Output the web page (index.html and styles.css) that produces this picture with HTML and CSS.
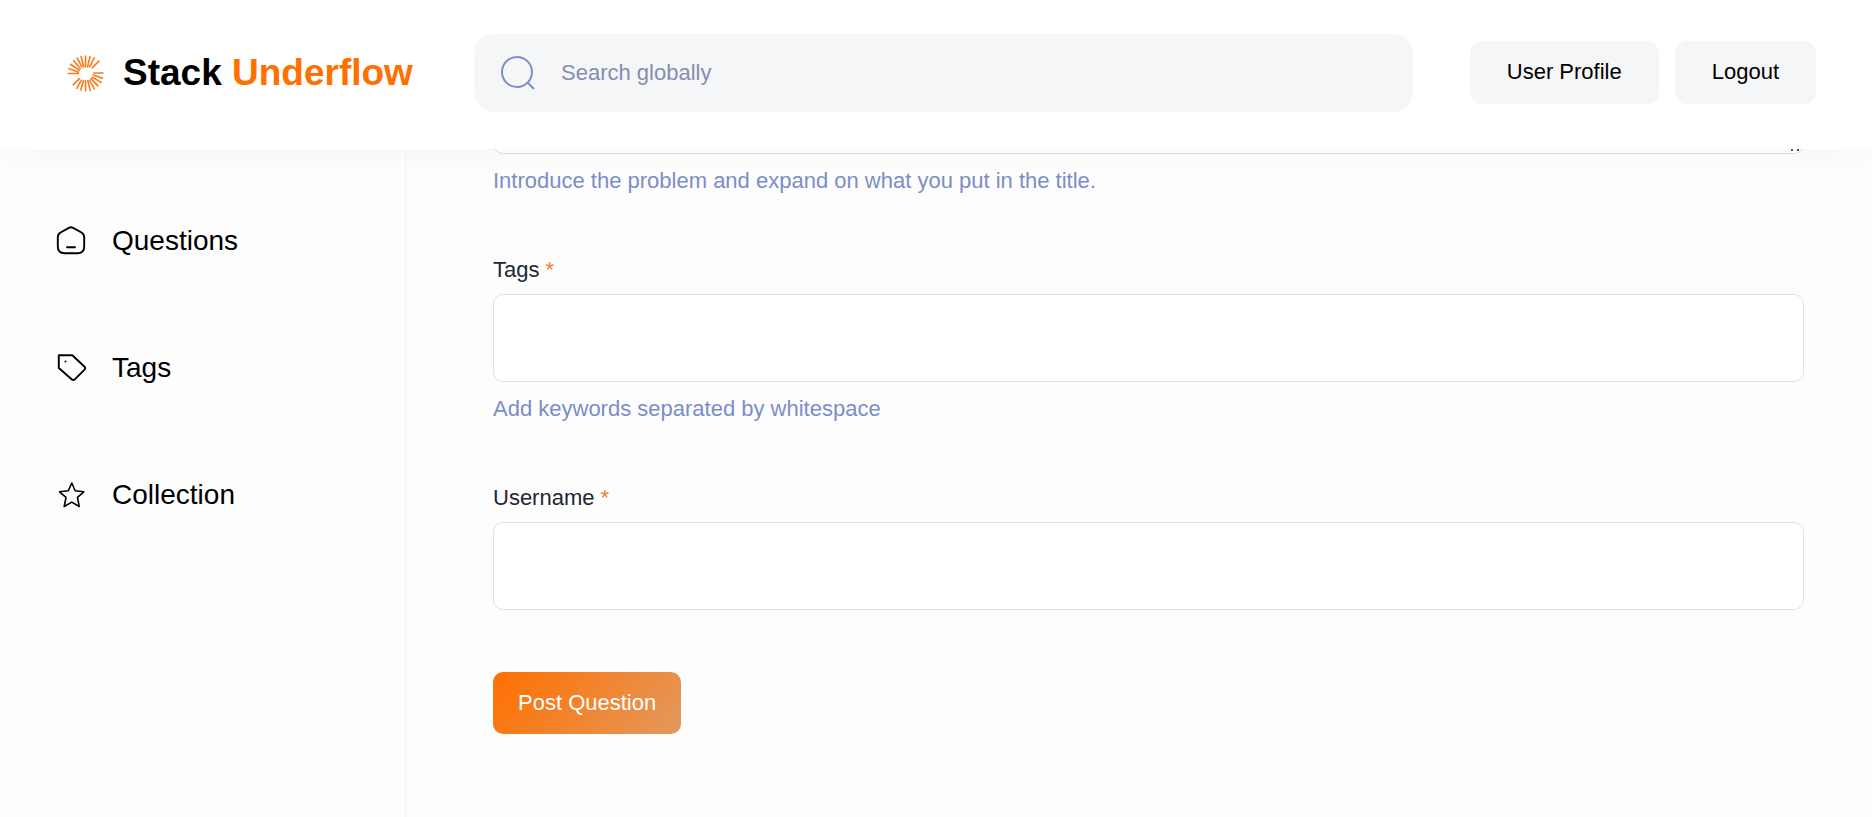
FILE: index.html
```html
<!DOCTYPE html>
<html lang="en">
<head>
<meta charset="utf-8">
<title>Stack Underflow</title>
<link rel="stylesheet" href="styles.css">
</head>
<body>
<header class="header">
  <a class="brand" href="#">
    <svg class="brand-icon" viewBox="-18 -18 36 36" aria-hidden="true">
      <path d="M-17 0L-7 0M-16-4.700L-7-1.500M-14.500-9L-6-3M-11.500-12.600L-5-4.700M-8-15L-3.600-6.500M-4.200-16.500L-1.800-6.500M0-17L0-6.500M4.400-16.500L2-6.500M8.500-15.200L4-6.500M13-12L6.500-5.500M17-.500L8-.500M16.500 4.500L7.500 1.500M15.300 8.600L6.500 3.500M12 12L5.500 5M8.500 15L4 6.500M4.600 16.500L2.300 7M0 17L0 7M-4.600 16L-2 7M-8.500 14.500L-4 6.500M-12 11L-6 5"/>
    </svg>
    <span class="brand-name">Stack <span class="brand-accent">Underflow</span></span>
  </a>
  <form class="search" role="search">
    <svg class="search-icon" viewBox="0 0 34 34" aria-hidden="true"><circle cx="16" cy="16" r="15"/><path d="M26.500 26.500L33 33"/></svg>
    <input class="search-input" type="search" placeholder="Search globally" aria-label="Search globally">
  </form>
  <div class="actions">
    <button class="action" type="button">User Profile</button>
    <button class="action" type="button">Logout</button>
  </div>
</header>
<div class="layout">
  <nav class="sidebar" aria-label="Main">
    <a class="nav-link" href="#">
      <svg class="nav-icon" viewBox="0 0 30 30" aria-hidden="true"><path d="M12.900 1.800a5 5 0 0 1 4.200 0L25.500 6.500q2.700 1.600 2.700 4.700v9.300q0 6.700-6.700 6.700h-13q-6.700 0-6.700-6.700v-9.300Q1.800 8.100 4.500 6.500zM11 21.200h8"/></svg>
      Questions
    </a>
    <a class="nav-link" href="#">
      <svg class="nav-icon" viewBox="0 0 30 30" aria-hidden="true"><path d="M2.800 2.200h13.500L28.300 13.500q1.800 1.700 0 3.400L19 26.200q-1.700 1.600-3.400 0L2.800 15z"/><circle class="tag-hole" cx="9.500" cy="8.500" r="1"/></svg>
      Tags
    </a>
    <a class="nav-link nav-link-star" href="#">
      <svg class="nav-icon" viewBox="0 0 30 30" aria-hidden="true"><path d="M15.800 3l3.400 7.800 8.600 1-6.300 5.600 1.700 9.100-7.400-4.400-7.600 4.400 1.800-9.100-6.500-5.600 8.700-1z"/></svg>
      Collection
    </a>
  </nav>
  <main class="main">
    <form class="question-form">
      <div class="field">
        <textarea class="control control-area" aria-label="Question text" aria-describedby="text-hint"></textarea>
        <p class="hint" id="text-hint">Introduce the problem and expand on what you put in the title.</p>
      </div>
      <div class="field">
        <label class="label" for="tags">Tags <span class="required">*</span></label>
        <input class="control" id="tags" type="text" aria-describedby="tags-hint">
        <p class="hint" id="tags-hint">Add keywords separated by whitespace</p>
      </div>
      <div class="field">
        <label class="label" for="username">Username <span class="required">*</span></label>
        <input class="control" id="username" type="text">
      </div>
      <button class="submit" type="submit">Post Question</button>
    </form>
  </main>
</div>
</body>
</html>
```
FILE: styles.css
```css
* {
  box-sizing: border-box;
}

body {
  margin: 0;
  height: 100vh;
  display: flex;
  flex-direction: column;
  overflow: hidden;
  background: #fdfdfd;
  color: #000;
  font-family: "Liberation Sans", Arial, sans-serif;
  font-size: 22px;
}

a {
  color: inherit;
  text-decoration: none;
}

button,
input,
textarea {
  font: inherit;
}

.header {
  position: relative;
  z-index: 1;
  display: flex;
  align-items: flex-start;
  gap: 57px;
  padding: 34px 56px 37px 67px;
  background: #fff;
  box-shadow: 0 12px 30px -8px rgba(0, 0, 0, 0.03);
}

.brand {
  display: flex;
  align-items: center;
  gap: 19px;
  height: 78px;
  min-width: 350px;
}

.brand-icon {
  width: 37px;
  height: 37px;
  fill: none;
  stroke: #f57c1f;
  stroke-width: 1.6;
  stroke-linecap: round;
}

.brand-name {
  font-size: 37px;
  font-weight: 700;
  white-space: nowrap;
}

.brand-accent {
  color: #ff7000;
}

.search {
  flex: 1;
  display: flex;
  align-items: center;
  gap: 26px;
  height: 78px;
  padding: 0 27px;
  border-radius: 20px;
  background: #f4f6f8;
}

.search-icon {
  width: 34px;
  height: 34px;
  fill: none;
  stroke: #7b8ec8;
  stroke-width: 2;
}

.search-input {
  flex: 1;
  min-width: 0;
  padding: 0;
  border: 0;
  outline: 0;
  background: transparent;
}

.search-input::placeholder {
  color: #858ead;
}

.actions {
  display: flex;
  gap: 16px;
  padding-top: 7px;
}

.action {
  height: 63px;
  padding: 0 37px 2px;
  border: 0;
  border-radius: 12px;
  background: #f4f6f8;
  color: #000;
  white-space: nowrap;
}

.layout {
  flex: 1;
  min-height: 0;
  display: grid;
  grid-template-columns: 406px 1fr;
}

.sidebar {
  display: flex;
  flex-direction: column;
  gap: 95px;
  padding: 76px 56px;
  border-right: 1px solid #f4f5f7;
}

.nav-link {
  display: flex;
  align-items: center;
  gap: 26px;
  font-size: 28px;
  line-height: 32px;
}

.nav-icon {
  width: 30px;
  height: 30px;
  fill: none;
  stroke: #000;
  stroke-width: 1.9;
  stroke-linejoin: round;
  stroke-linecap: round;
}

.nav-link-star .nav-icon {
  stroke-width: 1.6;
}

.tag-hole {
  fill: #000;
  stroke: none;
}

.main {
  min-width: 0;
  overflow: hidden;
  padding: 0 68px 0 87px;
}

/* The form is shown scrolled: only the foot of the text area is visible. */
.question-form {
  display: flex;
  flex-direction: column;
  align-items: flex-start;
  gap: 57px;
  margin-top: -195px;
}

.field {
  width: 100%;
  display: flex;
  flex-direction: column;
}

.label {
  margin-bottom: 8px;
  color: #212734;
  line-height: 32px;
}

.required {
  color: #f08030;
}

.control {
  width: 100%;
  height: 88px;
  padding: 0 20px;
  border: 1px solid #dde1ea;
  border-radius: 10px;
  background: #fff;
}

.control-area {
  height: 200px;
  padding: 20px;
  resize: vertical;
}

/* Dotted resize grip */
.control-area::-webkit-resizer {
  background:
    linear-gradient(#555, #555) 3px 11px / 2px 2px no-repeat,
    linear-gradient(#555, #555) 9px 11px / 2px 2px no-repeat;
}

.hint {
  margin: 11px 0 0;
  color: #7b8ec8;
  line-height: 32px;
}

.submit {
  height: 62px;
  margin-top: 5px;
  padding: 0 25px;
  border: 0;
  border-radius: 10px;
  background: linear-gradient(129deg, #ff7000 0%, #e2995f 100%);
  color: #fff;
}
```
